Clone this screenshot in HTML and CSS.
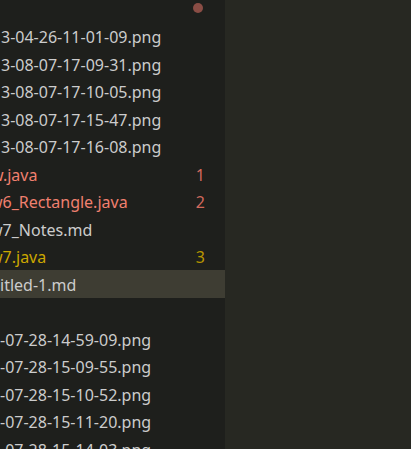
FILE: index.html
```html
<!DOCTYPE html>
<html lang="en">
<head>
<meta charset="utf-8">
<title>Explorer</title>
<link rel="stylesheet" href="styles.css">
</head>
<body>
<div class="window">
  <aside class="sidebar">
    <span class="status-dot"></span>
    <ul class="tree">
      <li class="row"><span class="name name-png">3-04-26-11-01-09.png</span></li>
      <li class="row"><span class="name name-png">3-08-07-17-09-31.png</span></li>
      <li class="row"><span class="name name-png">3-08-07-17-10-05.png</span></li>
      <li class="row"><span class="name name-png">3-08-07-17-15-47.png</span></li>
      <li class="row"><span class="name name-png">3-08-07-17-16-08.png</span></li>
      <li class="row error"><span class="name name-hw1">w.java</span><span class="badge">1</span></li>
      <li class="row error"><span class="name name-hw">w6_Rectangle.java</span><span class="badge">2</span></li>
      <li class="row"><span class="name name-hw">w7_Notes.md</span></li>
      <li class="row warning"><span class="name name-hw">w7.java</span><span class="badge">3</span></li>
      <li class="row selected"><span class="name name-untitled">itled-1.md</span></li>
      <li class="row"><span class="name"></span></li>
      <li class="row"><span class="name name-deep">-07-28-14-59-09.png</span></li>
      <li class="row"><span class="name name-deep">-07-28-15-09-55.png</span></li>
      <li class="row"><span class="name name-deep">-07-28-15-10-52.png</span></li>
      <li class="row"><span class="name name-deep">-07-28-15-11-20.png</span></li>
      <li class="row"><span class="name name-deep">-07-28-15-14-03.png</span></li>
    </ul>
  </aside>
  <main class="editor"></main>
</div>
</body>
</html>
```

FILE: styles.css
```css
* { box-sizing: border-box; }
html, body {
  margin: 0;
  padding: 0;
  height: 100%;
  overflow: hidden;
  background: #272822;
}
.window {
  display: flex;
  height: 449px;
  font-family: "Noto Sans", "Open Sans", sans-serif;
  font-size: 16px;
  color: #cccccc;
}
.sidebar {
  position: relative;
  width: 225px;
  flex: none;
  background: #1e1f1c;
  overflow: hidden;
  padding-top: 22.5px;
}
.status-dot {
  position: absolute;
  left: 193px;
  top: 3px;
  width: 10px;
  height: 10px;
  border-radius: 50%;
  background: #8a4d45;
}
.tree {
  list-style: none;
  margin: 0;
  padding: 0;
}
.row {
  display: flex;
  align-items: center;
  height: 27.5px;
  padding-top: 2px;
  padding-right: 20px;
  white-space: nowrap;
}
.name {
  flex: 1;
}
.name-png { margin-left: 1px; }
.name-hw { margin-left: -10px; }
.name-hw1 { margin-left: -9px; }
.name-untitled { margin-left: 0; }
.name-deep { margin-left: 0; }
.badge {
  flex: none;
  font-size: 16px;
}
.row.error { color: #f0806f; }
.row.error .badge { color: #d2695c; }
.row.warning { color: #cca700; }
.row.warning .badge { color: #b89600; }
.row.selected { background: #3e3d33; }
.editor {
  flex: 1;
  background: #272822;
}
```
